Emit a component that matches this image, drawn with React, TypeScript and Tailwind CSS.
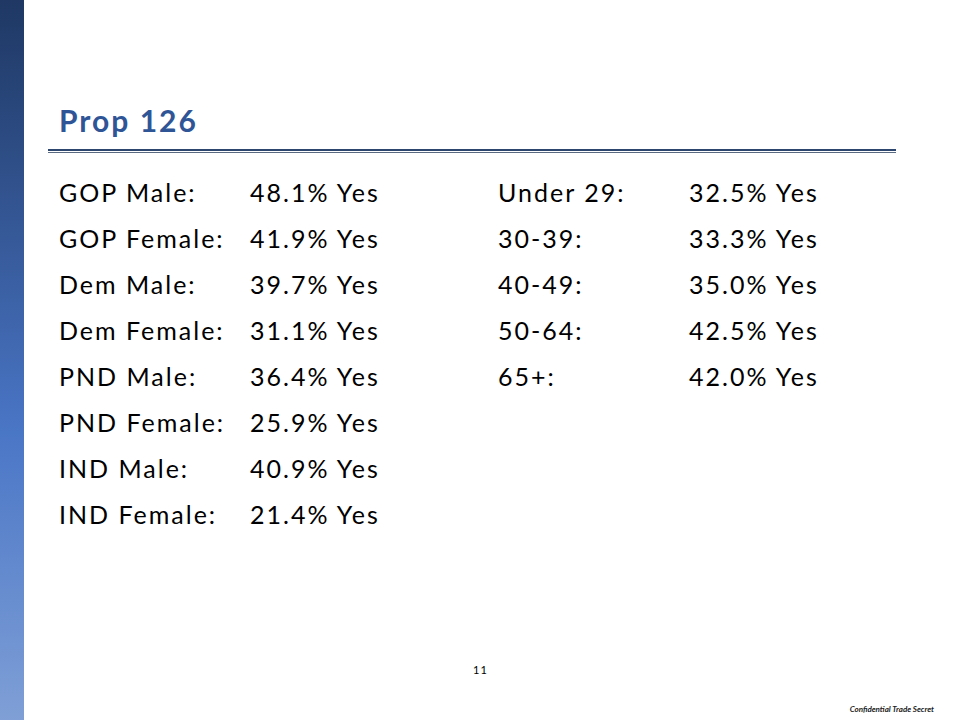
const left = [
  ['GOP Male:', '48.1% Yes'],
  ['GOP Female:', '41.9% Yes'],
  ['Dem Male:', '39.7% Yes'],
  ['Dem Female:', '31.1% Yes'],
  ['PND Male:', '36.4% Yes'],
  ['PND Female:', '25.9% Yes'],
  ['IND Male:', '40.9% Yes'],
  ['IND Female:', '21.4% Yes'],
];

const right = [
  ['Under 29:', '32.5% Yes'],
  ['30-39:', '33.3% Yes'],
  ['40-49:', '35.0% Yes'],
  ['50-64:', '42.5% Yes'],
  ['65+:', '42.0% Yes'],
];

function Column({ rows }: { rows: string[][] }) {
  return (
    <div className="flex flex-col w-[439px]">
      {rows.map(([label, value]) => (
        <div key={label} className="flex h-[46px] items-center text-[25px] tracking-[2px] text-black">
          <span className="w-[191px]">{label}</span>
          <span>{value}</span>
        </div>
      ))}
    </div>
  );
}

export default function App() {
  return (
    <div
      className="w-[960px] h-[720px] flex bg-white overflow-hidden"
      style={{ fontFamily: 'Lato, "Open Sans", sans-serif' }}
    >
      <div className="w-[24px] h-full shrink-0 bg-gradient-to-b from-[#1f3864] via-[#4a76c6] via-60% to-[#7f9fd6]" />
      <div className="flex-1 flex flex-col relative">
        <h1 className="mt-[102px] ml-[35px] text-[30px] leading-[36px] tracking-[2px] font-bold text-[#2f5597]">Prop 126</h1>
        <div className="ml-[24px] w-[848px] mt-[11px] flex flex-col gap-[1px]">
          <div className="h-[2px] bg-[#2c4670]" />
          <div className="h-[1px] bg-[#5a6a80]" />
        </div>
        <div className="flex ml-[35px] mt-[17px]">
          <Column rows={left} />
          <Column rows={right} />
        </div>
        <div className="absolute left-[449px] top-[662px] text-[11px] tracking-[1px] text-black">11</div>
        <div className="absolute right-[26px] top-[703px] text-[8px] italic font-bold text-[#222]">
          Confidential Trade Secret
        </div>
      </div>
    </div>
  );
}
